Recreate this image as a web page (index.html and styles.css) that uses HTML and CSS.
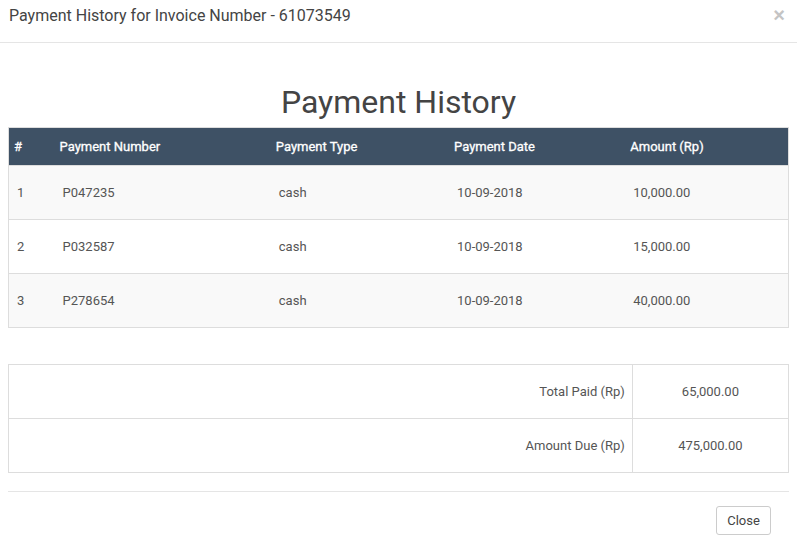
FILE: index.html
```html
<!DOCTYPE html>
<html>
<head>
<meta charset="utf-8">
<link rel="stylesheet" href="styles.css">
</head>
<body>
<div class="modal">
  <div class="modal-header">
    <h4 class="modal-title">Payment History for Invoice Number - 61073549</h4>
    <span class="close">&times;</span>
  </div>
  <div class="modal-body">
    <h1 class="page-title">Payment History</h1>
    <table class="history">
      <colgroup>
        <col class="c1"><col class="c2"><col class="c3"><col class="c4"><col class="c5">
      </colgroup>
      <thead>
        <tr><th>#</th><th>Payment Number</th><th>Payment Type</th><th>Payment Date</th><th>Amount (Rp)</th></tr>
      </thead>
      <tbody>
        <tr><td>1</td><td>P047235</td><td>cash</td><td>10-09-2018</td><td>10,000.00</td></tr>
        <tr><td>2</td><td>P032587</td><td>cash</td><td>10-09-2018</td><td>15,000.00</td></tr>
        <tr><td>3</td><td>P278654</td><td>cash</td><td>10-09-2018</td><td>40,000.00</td></tr>
      </tbody>
    </table>
    <table class="summary">
      <colgroup><col class="s1"><col class="s2"></colgroup>
      <tr><td class="label">Total Paid (Rp)</td><td class="value">65,000.00</td></tr>
      <tr><td class="label">Amount Due (Rp)</td><td class="value">475,000.00</td></tr>
    </table>
    <div class="modal-footer">
      <button class="btn">Close</button>
    </div>
  </div>
</div>
</body>
</html>
```
FILE: styles.css
```css
html, body {
  margin: 0;
  padding: 0;
  background: #fff;
}
body {
  font-family: Roboto, "Liberation Sans", sans-serif;
  color: #555;
}
.modal {
  width: 797px;
}
.modal-header {
  display: flex;
  justify-content: space-between;
  align-items: flex-start;
  padding: 5px 12px 15px 9px;
  border-bottom: 1px solid #e5e5e5;
}
.modal-title {
  margin: 0;
  font-size: 16px;
  font-weight: 400;
  line-height: 22px;
  color: #444;
}
.close {
  font-size: 20px;
  line-height: 20px;
  font-weight: 700;
  color: #c4c4c4;
  font-family: "Liberation Sans", sans-serif;
}
.modal-body {
  padding: 0 8px;
}
.page-title {
  margin: 0;
  padding-top: 37px;
  height: 47px;
  font-size: 32px;
  font-weight: 400;
  line-height: 44px;
  text-align: center;
  color: #444;
}
table {
  border-collapse: collapse;
  width: 781px;
  table-layout: fixed;
  font-size: 13px;
}
.history {
  border: 1px solid #ddd;
}
.c1 { width: 46px; }
.c2 { width: 216px; }
.c3 { width: 178px; }
.c4 { width: 176px; }
.c5 { width: 163px; }
.history th {
  background: #3e5165;
  color: #fff;
  font-weight: 400;
  -webkit-text-stroke: 0.3px #fff;
  text-align: left;
  height: 37px;
  padding: 0 0 0 5px;
  border-top: 1px solid #ddd;
}
.history td {
  height: 53px;
  padding: 0 0 0 8px;
  border-top: 1px solid #ddd;
  color: #555;
}
.history tbody tr:nth-child(odd) td {
  background: #f9f9f9;
}
.summary {
  margin-top: 36px;
  border: 1px solid #ddd;
}
.s1 { width: 623px; }
.s2 { width: 156px; }
.summary td {
  height: 53px;
  border: 1px solid #ddd;
  color: #555;
  padding: 0;
}
.summary .label {
  text-align: right;
  padding-right: 7px;
}
.summary .value {
  text-align: center;
}
.modal-footer {
  margin-top: 18px;
  border-top: 1px solid #e5e5e5;
  padding: 14px 18px 20px 0;
  display: flex;
  justify-content: flex-end;
}
.btn {
  font-family: Roboto, "Liberation Sans", sans-serif;
  font-size: 13px;
  color: #444;
  background: #fff;
  border: 1px solid #ccc;
  border-radius: 3px;
  height: 29px;
  width: 55px;
  padding: 0;
}
```
